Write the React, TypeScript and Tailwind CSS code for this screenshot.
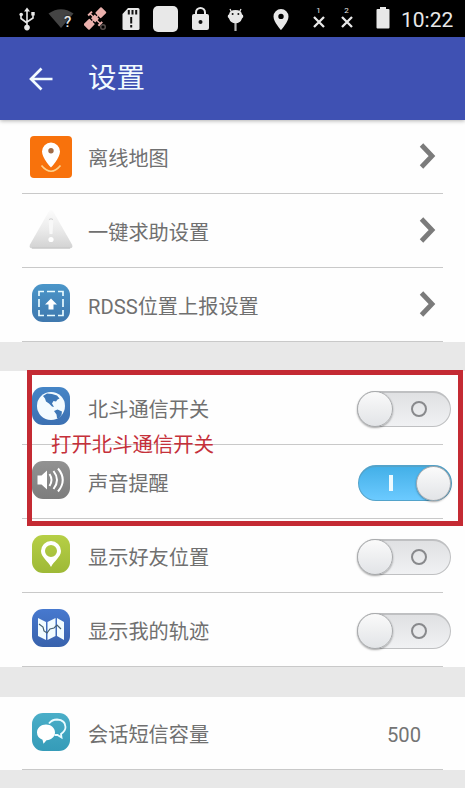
import type { ReactNode } from 'react';

const SANS = "font-['Roboto','Noto_Sans_CJK_SC',sans-serif]";

function StatusBar() {
  return (
    <div className="flex h-[37px] items-center bg-black text-[#e8e8e8]">
      {/* usb */}
      <svg className="ml-[18px] h-[37px] w-[18px] shrink-0" viewBox="18 0 18 37" fill="none" stroke="currentColor" strokeWidth="1.6">
        <path d="M27 11v16M21 14v4.5l6 4.5M33 14v4l-6 4" />
        <path d="M27 7.5l3 4h-6z" fill="currentColor" stroke="none" />
        <circle cx="27" cy="27.6" r="2.8" fill="currentColor" stroke="none" />
        <circle cx="21.2" cy="14.5" r="1.8" fill="currentColor" stroke="none" />
        <path d="M31.3 12h3.4v3.6h-3.4z" fill="currentColor" stroke="none" />
      </svg>
      {/* wifi */}
      <div className="relative ml-[12px] h-[37px] w-[26px] shrink-0">
        <svg className="h-[37px] w-[26px]" viewBox="48 0 26 37">
          <path d="M48.5 13.5Q61 5 73.500 13.500L61 28z" fill="#444" />
        </svg>
        <span className="absolute left-[16px] top-[13px] font-['Roboto'] text-[15px] leading-[18px] font-medium [text-shadow:0_0_2px_#000]">?</span>
      </div>
      {/* satellite */}
      <svg className="ml-[10px] h-[37px] w-[24px] shrink-0" viewBox="84 0 24 37" fill="#eab0ac">
        <g transform="rotate(-45 95 18.500)">
          <rect x="82.500" y="14.500" width="8.500" height="8" rx="1" />
          <rect x="99" y="14.500" width="8.500" height="8" rx="1" />
          <rect x="92.300" y="15.500" width="5.400" height="6" />
          <path d="M90 18h10v1.200H90zM94.300 11h1.400v15h-1.400zM92.300 10.500h5.400v2h-5.400zM92.300 25h5.400v2h-5.400z" />
        </g>
        <circle cx="103" cy="27" r="2.300" fill="none" stroke="#554c4a" strokeWidth="1.500" />
      </svg>
      {/* sd card */}
      <svg className="ml-[14px] h-[37px] w-[18px] shrink-0" viewBox="122 0 18 37">
        <path d="M128 8h10q1.500 0 1.500 1.500v19q0 1.500-1.500 1.500h-14q-1.500 0-1.500-1.500V14z" fill="currentColor" />
        <path d="M128.800 10v4.500M132.500 10v4.500M136.200 10v4.500M131.200 17v6.500M131.200 25v2.500" stroke="#111" strokeWidth="2" />
      </svg>
      <div className="ml-[13px] h-[26px] w-[25px] shrink-0 rounded-[5px] bg-[#e8e8e8]" />
      {/* lock */}
      <svg className="ml-[13px] h-[37px] w-[19px] shrink-0" viewBox="191 0 19 37">
        <path d="M196 15v-2.500a4.500 4.500 0 0 1 9 0V15" fill="none" stroke="currentColor" strokeWidth="2" />
        <rect x="192" y="14" width="17" height="16" rx="2" fill="currentColor" />
        <circle cx="200.500" cy="22" r="2" fill="#111" />
      </svg>
      {/* android head */}
      <svg className="ml-[17px] h-[37px] w-[17px] shrink-0" viewBox="227 0 17 37">
        <path d="M230 9l1.500 3M241 9l-1.500 3" stroke="currentColor" strokeWidth="1.300" />
        <path d="M235.500 22v9" stroke="#b5b5b5" strokeWidth="2.200" />
        <path d="M229 14.500q.5-4.500 6.500-4.500t6.500 4.500l1 .5q1 2-1 3.500-1.500 4.700-6.500 4.700T229 18.500q-2-1.500-1-3.500z" fill="currentColor" />
        <circle cx="232.600" cy="14" r="1" fill="#111" />
        <circle cx="238.400" cy="14" r="1" fill="#111" />
      </svg>
      {/* location */}
      <svg className="ml-[29px] h-[37px] w-[16px] shrink-0" viewBox="273 0 16 37">
        <path fillRule="evenodd" d="M281 9a7.500 7.500 0 0 0-7.500 7.500C273.500 22 281 30 281 30s7.500-8 7.500-13.500A7.500 7.500 0 0 0 281 9zm0 4.700a2.700 2.700 0 1 1 0 5.400 2.700 2.700 0 0 1 0-5.400z" fill="currentColor" />
      </svg>
      <SimMissing slot="1" className="ml-[23px]" />
      <SimMissing slot="2" className="ml-[15px]" />
      {/* battery */}
      <svg className="ml-[23px] h-[37px] w-[14px] shrink-0" viewBox="377 0 14 37">
        <path d="M381 7h6v2h2.500q1 0 1 1v17.500q0 1-1 1h-11q-1 0-1-1V10q0-1 1-1h2.500z" fill="currentColor" />
      </svg>
      <span className="ml-[11px] pt-[3px] font-['Roboto'] text-[21px] leading-[34px]">10:22</span>
    </div>
  );
}

function SimMissing({ slot, className }: { slot: string; className: string }) {
  return (
    <div className={`flex w-[13px] shrink-0 flex-col items-center ${className}`}>
      <span className="h-[9px] font-['Roboto'] text-[8px] leading-[7px]">{slot}</span>
      <svg className="mb-[3px] h-[12px] w-[12px]" viewBox="0 0 12 12" stroke="currentColor" strokeWidth="2.300">
        <path d="M1 1l10 10M11 1L1 11" />
      </svg>
    </div>
  );
}

function Tile({ children, className }: { children: ReactNode; className: string }) {
  return (
    <svg viewBox="0 0 38 38" className={`mb-[3px] h-[38px] w-[38px] rounded-[11px] bg-linear-to-b ${className}`}>
      {children}
    </svg>
  );
}

const OfflineMapIcon = () => (
  <svg viewBox="0 0 42 42" className="h-[42px] w-[42px] rounded-[4px] bg-[#f8720c]">
    <path d="M21 6.500a9 9 0 0 0-9 9C12 22 21 31.500 21 31.500s9-9.500 9-16a9 9 0 0 0-9-9z" fill="#fff" />
    <circle cx="21" cy="14.800" r="2.700" fill="#a06c48" />
    <path d="M11.500 29.500q9.500 11.500 19 0" fill="none" stroke="#ffd08a" strokeWidth="1.700" />
  </svg>
);

const WarningIcon = () => (
  <svg viewBox="0 0 44 42" className="mb-[3px] h-[42px] w-[44px]">
    <defs>
      <linearGradient id="warn" x1="0" y1="0" x2="0" y2="1">
        <stop offset="0" stopColor="#fcfcfc" />
        <stop offset="0.500" stopColor="#ebebeb" />
        <stop offset="1" stopColor="#d2d2d2" />
      </linearGradient>
    </defs>
    <path d="M19.500 4q2.500-4 5 0L43 36.500q1.500 4-3 4H4q-4.500 0-3-4z" fill="url(#warn)" />
    <path d="M3 40h38" stroke="#c4c4c4" strokeWidth="1" />
    <path d="M19.700 13q2.300-3 4.600 0L23.500 26h-3z" fill="#f8f8f8" />
    <path d="M20 11.500q2-1.500 4 0" fill="none" stroke="#d0d0d0" />
    <circle cx="22" cy="31.500" r="2.600" fill="#fff" />
  </svg>
);

const ReportIcon = () => (
  <Tile className="from-[#4b96c9] to-[#3f78ae]">
    <path d="M7 12V7.500h5M15 7.500h8M26 7.500h5V12M31 15v8M31 26v5.500h-5M23 31.500h-8M12 31.500H7V26M7 23v-8" fill="none" stroke="#e8fbff" strokeWidth="1.700" />
    <path d="M19 14.500l6 6h-3.500v5h-5v-5H13z" fill="#fff" />
  </Tile>
);

const GlobeIcon = () => (
  <Tile className="from-[#4585c6] to-[#3c70b2]">
    <circle cx="19" cy="19" r="14" fill="#f3fbff" />
    <path d="M11 9l4-2.500 5 .5 5 1.500 2.500 3-2 1-1.500 2-2.500-.5-1.500 2.500 2 3.500-2-.5-3-3-3-2-1-3z" fill="#3d78b8" />
    <path d="M22 24l3.500-1.500 4.500 2-.5 3.500-3 3.500-1.500-.5-.500-3.500z" fill="#3d78b8" />
  </Tile>
);

const SoundIcon = () => (
  <Tile className="from-[#929292] to-[#7d7d7d]">
    <path d="M5.500 14.500h4L15 9.500v19l-5.500-5h-4z" fill="#fff" />
    <path d="M17.500 13q4 6 0 12M21.500 10q7 9 0 18M26 7.500q9.500 11.500 0 23" fill="none" stroke="#fff" strokeWidth="2" />
  </Tile>
);

const FriendIcon = () => (
  <Tile className="from-[#b6cf46] to-[#9eb936]">
    <path fillRule="evenodd" d="M19 6A10 10 0 0 0 9 16c0 6 7 10 10 16 3-6 10-10 10-16A10 10 0 0 0 19 6zm0 4a6 6 0 1 1 0 12 6 6 0 0 1 0-12z" fill="#fff" />
  </Tile>
);

const TrackIcon = () => (
  <Tile className="from-[#4779cf] to-[#3862ac]">
    <path d="M6 9l8 4v18l-8-4zM15.500 13l8-4v18l-8 4zM25 9l7 4v18l-7-4z" fill="#f1fcff" />
    <path d="M7 15l4 3 1 4 3 2 3-4 4-1 3-3 4 4" fill="none" stroke="#456171" strokeWidth="1.200" />
  </Tile>
);

const ChatIcon = () => (
  <Tile className="from-[#4aaec8] to-[#359bb8]">
    <path d="M17 10.500Q20 6.500 25 6.500 33.500 7 33.500 14q0 4-4.500 7l.5 3.500-4-2.500h-3" fill="none" stroke="#e9fbff" strokeWidth="1.800" />
    <path d="M14 11.500c-5 0-9 3.500-9 8 0 3.500 2 6 5.500 7.300l1 4 3-3.500c5-.300 8.500-3.600 8.500-7.800 0-4.500-4-8-9-8z" fill="#fff" />
  </Tile>
);

const Chevron = () => (
  <svg viewBox="0 0 18 28" className="mr-[28px] mb-[2px] h-[28px] w-[18px]" fill="none" stroke="#7b7b7b" strokeWidth="4.800">
    <path d="M2.500 3l10.500 11L2.500 25" />
  </svg>
);

function Toggle({ on }: { on?: boolean }) {
  return on ? (
    <div className="mt-[2px] mr-[13px] flex h-[36px] w-[94px] items-center justify-end rounded-full border border-t-2 border-[#53a3ca] bg-linear-to-b from-[#43b0e8] to-[#6bcaff]">
      <div className="mr-[23px] h-[16px] w-[4px] bg-[#ecfaff]" />
      <div className="h-[35px] w-[35px] rounded-full border border-[#a6a9ad] bg-linear-to-b from-[#fbfbfb] to-[#e2e4e7] shadow-[0_1px_2px_rgba(0,0,0,0.35)]" />
    </div>
  ) : (
    <div className="mt-[2px] mr-[14px] flex h-[36px] w-[94px] items-center rounded-full border border-t-2 border-[#bfc0c2] bg-linear-to-b from-[#e0e1e3] to-[#f0f1f3]">
      <div className="-ml-px h-[36px] w-[36px] rounded-full border border-[#a9abad] bg-linear-to-b from-[#fafafa] to-[#e2e4e7] shadow-[0_1px_2px_rgba(0,0,0,0.35)]" />
      <div className="ml-[18px] h-[16px] w-[16px] rounded-full border-[2.5px] border-[#88898c]" />
    </div>
  );
}

function Row({ icon, label, children, className = 'h-[74px]' }: { icon: ReactNode; label: string; children: ReactNode; className?: string }) {
  return (
    <div className={`flex flex-col bg-[#fefefe] ${className}`}>
      <div className="flex min-h-0 flex-1 items-center">
        <div className="ml-[22px] flex w-[57px] shrink-0 justify-center">{icon}</div>
        <span className="ml-[9px] flex-1 pt-[4px] text-[20.2px] leading-[30px] whitespace-nowrap text-[#707070]">{label}</span>
        {children}
      </div>
      <div className="ml-[22px] h-px w-[421px] bg-[#c9c9c9]" />
    </div>
  );
}

export default function App() {
  return (
    <div className={`relative flex h-[788px] w-[465px] flex-col overflow-hidden bg-[#e8e8e8] ${SANS}`}>
      <StatusBar />
      <header className="z-10 flex h-[83px] items-center bg-[#3f51b3] text-[#f2fbff] shadow-[0_1px_4px_rgba(0,0,0,0.3)]">
        <svg viewBox="0 0 24 24" className="ml-[29px] h-[24px] w-[24px]" fill="none" stroke="currentColor" strokeWidth="2.700">
          <path d="M23.500 12H2M12.500 1.500L2 12l10.500 10.500" />
        </svg>
        <h1 className="ml-[35px] pt-px text-[28.5px] leading-[40px]">设置</h1>
      </header>

      <section>
        <Row icon={<OfflineMapIcon />} label="离线地图"><Chevron /></Row>
        <Row icon={<WarningIcon />} label="一键求助设置"><Chevron /></Row>
        <Row icon={<ReportIcon />} label="RDSS位置上报设置"><Chevron /></Row>
      </section>

      <section className="mt-[29px]">
        <Row icon={<GlobeIcon />} label="北斗通信开关"><Toggle /></Row>
        <Row icon={<SoundIcon />} label="声音提醒"><Toggle on /></Row>
        <Row icon={<FriendIcon />} label="显示好友位置"><Toggle /></Row>
        <Row icon={<TrackIcon />} label="显示我的轨迹"><Toggle /></Row>
      </section>

      <section className="mt-[30px]">
        <Row icon={<ChatIcon />} label="会话短信容量" className="h-[73px]">
          <span className="mr-[44px] pt-[4px] text-[20.2px] text-[#747474]">500</span>
        </Row>
      </section>

      {/* annotation over the list */}
      <div className="absolute top-[370px] left-[27px] h-[156px] w-[436px] border-[5px] border-[#c42a33]" />
      <span className="absolute top-[430px] left-[51px] text-[20.4px] leading-[30px] whitespace-nowrap text-[#c5303a]">打开北斗通信开关</span>
    </div>
  );
}
